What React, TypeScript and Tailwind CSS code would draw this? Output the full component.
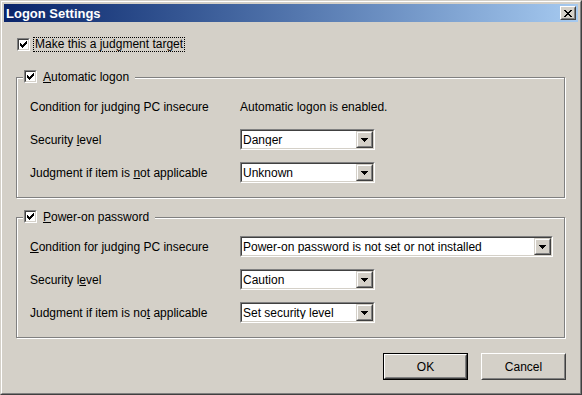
import React from "react";

const font = { fontFamily: '"Liberation Sans", Arial, sans-serif' };

function Check() {
  return (
    <span className="flex h-[13px] w-[13px] shrink-0 items-center justify-center border border-t-[#808080] border-l-[#808080] border-r-white border-b-white">
      <span className="flex h-[11px] w-[11px] items-center justify-center border border-t-[#404040] border-l-[#404040] border-r-[#d4d0c8] border-b-[#d4d0c8] bg-white">
        <svg width="7" height="7" viewBox="0 0 7 7" shapeRendering="crispEdges">
          <rect x="6" y="0" width="1" height="1" fill="#000" />
          <rect x="5" y="1" width="2" height="1" fill="#000" />
          <rect x="0" y="2" width="1" height="1" fill="#000" />
          <rect x="4" y="2" width="3" height="1" fill="#000" />
          <rect x="0" y="3" width="2" height="1" fill="#000" />
          <rect x="3" y="3" width="3" height="1" fill="#000" />
          <rect x="0" y="4" width="5" height="1" fill="#000" />
          <rect x="1" y="5" width="3" height="1" fill="#000" />
          <rect x="2" y="6" width="1" height="1" fill="#000" />
        </svg>
      </span>
    </span>
  );
}

function Arrow() {
  return (
    <svg width="7" height="4" viewBox="0 0 7 4" shapeRendering="crispEdges">
      <rect x="0" y="0" width="7" height="1" fill="#000" />
      <rect x="1" y="1" width="5" height="1" fill="#000" />
      <rect x="2" y="2" width="3" height="1" fill="#000" />
      <rect x="3" y="3" width="1" height="1" fill="#000" />
    </svg>
  );
}

function Combo({ value, wide }: { value: string; wide?: boolean }) {
  return (
    <div
      className={`flex h-[21px] ${wide ? "w-[313px]" : "w-[135px]"} border border-t-[#808080] border-l-[#808080] border-r-white border-b-white`}
    >
      <div className="flex flex-1 items-center border border-t-[#404040] border-l-[#404040] border-r-[#d4d0c8] border-b-[#d4d0c8] bg-white">
        <span className="flex-1 truncate pl-[1px] text-[12px] leading-none text-black">{value}</span>
        <div className="flex h-[17px] w-[17px] items-center justify-center border border-t-[#d4d0c8] border-l-[#d4d0c8] border-r-[#404040] border-b-[#404040] bg-[#d4d0c8]">
          <div className="flex h-[15px] w-[15px] items-center justify-center border border-t-white border-l-white border-r-[#808080] border-b-[#808080]">
            <Arrow />
          </div>
        </div>
      </div>
    </div>
  );
}

function Row({ label, children }: { label: React.ReactNode; children: React.ReactNode }) {
  return (
    <div className="flex h-[21px] items-center">
      <div className="w-[210px] text-[12px] leading-none text-black">{label}</div>
      {children}
    </div>
  );
}

function Group({ title, children }: { title: React.ReactNode; children: React.ReactNode }) {
  return (
    <div className="relative w-[549px] border border-[#808080] pt-[18px] pb-[14px] pl-[13px] shadow-[inset_1px_1px_0_#ffffff,1px_1px_0_#ffffff]">
      <div className="absolute left-[6px] top-[-8px] flex h-[13px] items-center gap-[6px] bg-[#d4d0c8] pl-[1px] pr-[6px]">
        <Check />
        <span className="text-[12px] leading-none text-black">{title}</span>
      </div>
      <div className="flex flex-col gap-[12px]">{children}</div>
    </div>
  );
}

function Button({ label, def }: { label: string; def?: boolean }) {
  return (
    <div className={`h-[27px] w-[85px] ${def ? "border border-black" : ""}`}>
      <div className="flex h-full w-full border border-t-white border-l-white border-r-[#404040] border-b-[#404040]">
        <div className="flex flex-1 items-center justify-center border border-t-[#d4d0c8] border-l-[#d4d0c8] border-r-[#808080] border-b-[#808080] text-[12px] leading-none text-black">
          {label}
        </div>
      </div>
    </div>
  );
}

export default function App() {
  return (
    <div style={font} className="h-[395px] w-[582px] border border-t-[#d4d0c8] border-l-[#d4d0c8] border-r-[#404040] border-b-[#404040] bg-[#d4d0c8]">
      <div className="flex h-full w-full flex-col border border-t-white border-l-white border-r-[#808080] border-b-[#808080] p-[2px]">
        <div className="flex h-[18px] items-center justify-between bg-gradient-to-r from-[#0a246a] to-[#a6caf0] pl-[2px] pr-[2px]">
          <span className="text-[13px] font-bold leading-none text-white">Logon Settings</span>
          <div className="flex h-[14px] w-[16px] border border-t-white border-l-white border-r-[#404040] border-b-[#404040] bg-[#d4d0c8]">
            <div className="flex flex-1 items-center justify-center border border-t-[#d4d0c8] border-l-[#d4d0c8] border-r-[#808080] border-b-[#808080]">
              <svg width="8" height="7" viewBox="0 0 8 7" shapeRendering="crispEdges">
                <path d="M0 0h2v1H0zM6 0h2v1H6zM1 1h2v1H1zM5 1h2v1H5zM2 2h4v1H2zM3 3h2v1H3zM2 4h4v1H2zM1 5h2v1H1zM5 5h2v1H5zM0 6h2v1H0zM6 6h2v1H6z" fill="#000" />
              </svg>
            </div>
          </div>
        </div>

        <div className="flex flex-col pl-[12px]">
          <div className="mt-[15px] ml-[1px] flex h-[15px] items-center gap-[3px]">
            <Check />
            <span className="border border-dotted border-black px-[1px] text-[12px] leading-[13px] text-black">
              Make this a judgment target
            </span>
          </div>

          <div className="mt-[25px]">
            <Group title={<><u>A</u>utomatic logon</>}>
              <Row label="Condition for judging PC insecure">
                <span className="text-[12px] leading-none text-black">Automatic logon is enabled.</span>
              </Row>
              <Row label={<>Security <u>l</u>evel</>}>
                <Combo value="Danger" />
              </Row>
              <Row label={<>Judgment if item is <u>n</u>ot applicable</>}>
                <Combo value="Unknown" />
              </Row>
            </Group>
          </div>

          <div className="mt-[19px]">
            <Group title={<><u>P</u>ower-on password</>}>
              <Row label={<><u>C</u>ondition for judging PC insecure</>}>
                <Combo value="Power-on password is not set or not installed" wide />
              </Row>
              <Row label={<>Security l<u>e</u>vel</>}>
                <Combo value="Caution" />
              </Row>
              <Row label={<>Judgment if item is no<u>t</u> applicable</>}>
                <Combo value="Set security level" />
              </Row>
            </Group>
          </div>

          <div className="mt-[15px] flex w-[550px] justify-end gap-[13px]">
            <Button label="OK" def />
            <Button label="Cancel" />
          </div>
        </div>
      </div>
    </div>
  );
}
